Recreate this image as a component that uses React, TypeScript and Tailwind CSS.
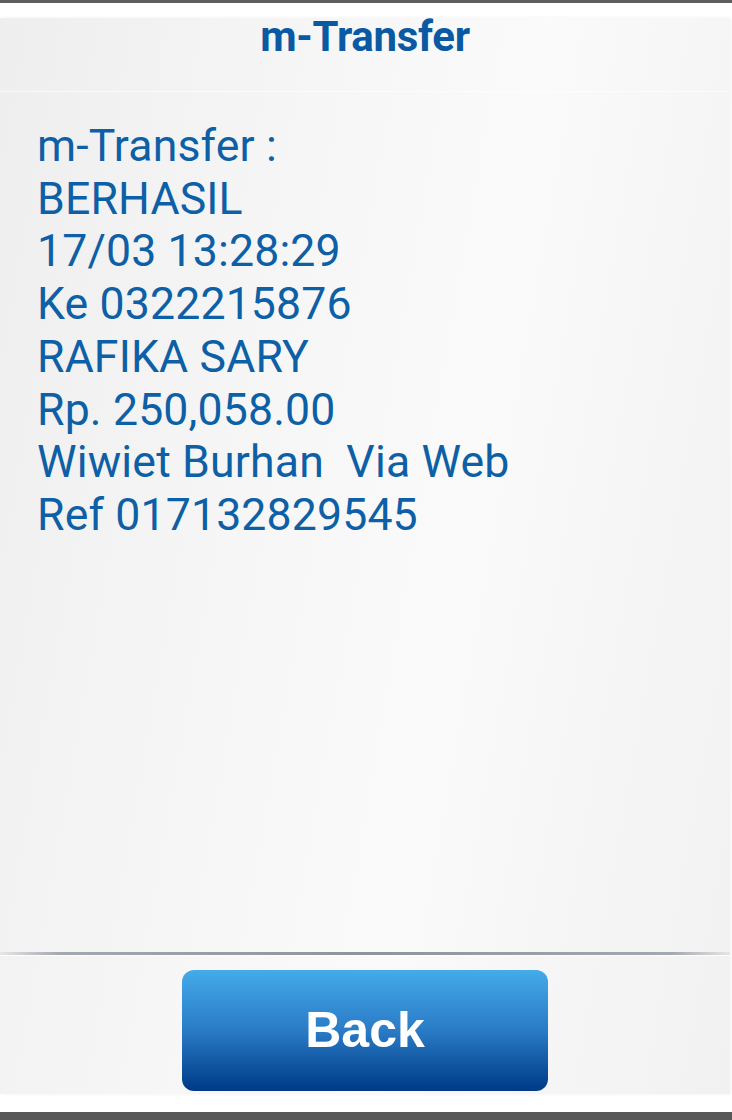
const LINES = [
  'm-Transfer :',
  'BERHASIL',
  '17/03 13:28:29',
  'Ke 0322215876',
  'RAFIKA SARY',
  'Rp. 250,058.00',
  'Wiwiet Burhan  Via Web',
  'Ref 017132829545',
];

export default function App() {
  return (
    <div className="flex h-[1120px] w-[732px] flex-col overflow-hidden bg-white font-['Roboto',sans-serif]">
      {/* cut-off strip of the page behind */}
      <div className="h-[3px] bg-[#5e5e5e]" />
      <div className="h-[15px]" />

      {/* Panel */}
      <div className="flex h-[1076px] w-[730px] flex-col bg-[linear-gradient(100deg,#eeeeee_0%,#f6f6f6_35%,#fafafa_60%,#f1f1f1_100%)] shadow-[1px_0_4px_rgba(0,0,0,0.06)]">
        <div className="h-[74px] border-b border-white/60 text-center">
          <h1 className="text-[42px] font-bold leading-[38px] tracking-[-0.3px] text-[#0a5aa3]">m-Transfer</h1>
        </div>

        <div className="flex-1 pl-[37px] pt-[28px] text-[44.6px] leading-[52.7px] tracking-[0.15px] text-[#0d5fa6]">
          {LINES.map((line) => (
            <p key={line} className="whitespace-pre">
              {line}
            </p>
          ))}
        </div>

        <div className="h-[3px] bg-[linear-gradient(to_right,#e6e6e6_0%,#a4a8b0_8%,#8e939c_50%,#a4a8b0_92%,#e6e6e6_100%)]" />
        <div className="h-px bg-white/80" />

        <div className="flex justify-center pb-[3px] pt-[14px]">
          <button className="h-[121px] w-[366px] rounded-[12px] bg-gradient-to-b from-[#44abe9] via-[#2a7bc6] to-[#003a86] font-['Liberation_Sans',Arial,sans-serif] text-[50px] font-bold text-white">
            Back
          </button>
        </div>
      </div>

      <div className="h-[18px]" />
      <div className="flex-1 bg-[#585858]" />
    </div>
  );
}
